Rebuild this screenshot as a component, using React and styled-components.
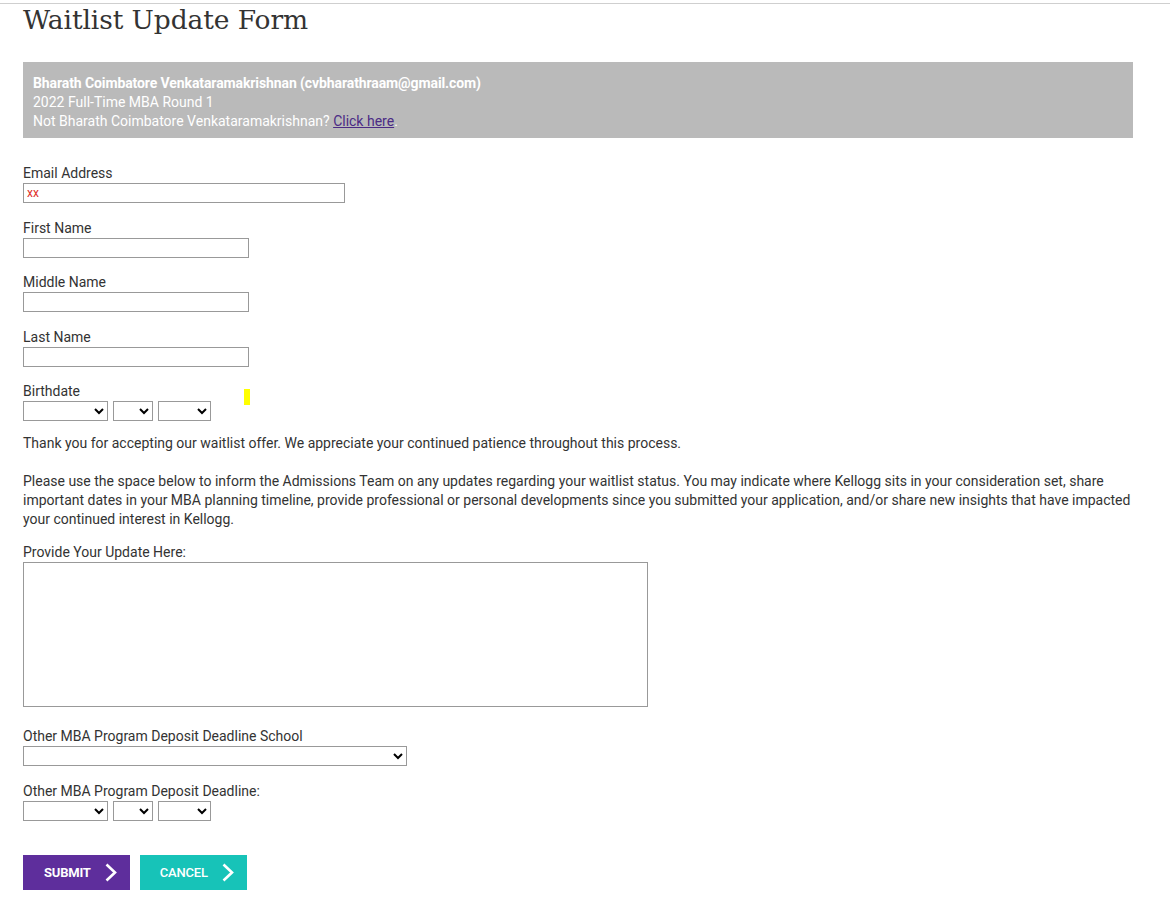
import React from 'react';
import styled, { createGlobalStyle } from 'styled-components';

const GlobalStyle = createGlobalStyle`
  body {
    margin: 0;
    background: #fff;
    font-family: Roboto, "Liberation Sans", Arial, sans-serif;
    font-size: 14px;
    color: #333;
  }
`;

function Chevron() {
  return (
    <svg width="12" height="19" viewBox="0 0 12 19">
      <path d="M1.5 1.5 L10 9.5 L1.5 17.5" fill="none" stroke="#fff" strokeWidth="2.6" />
    </svg>
  );
}

function DateSelects() {
  return (
    <SelectRow>
      <Select w={85}><option></option></Select>
      <Select w={40}><option></option></Select>
      <Select w={53}><option></option></Select>
    </SelectRow>
  );
}

export default function App() {
  return (
    <>
      <GlobalStyle />
      <TopRule />
      <Page>
        <Title>Waitlist Update Form</Title>

        <InfoBox>
          <strong>Bharath Coimbatore Venkataramakrishnan (cvbharathraam@gmail.com)</strong>
          <div>2022 Full-Time MBA Round 1</div>
          <div>Not Bharath Coimbatore Venkataramakrishnan? <a href="#">Click here</a>.</div>
        </InfoBox>

        <Field>
          <Label>Email Address</Label>
          <TextInput w={322} defaultValue="xx" error />
        </Field>
        <Field>
          <Label>First Name</Label>
          <TextInput w={226} />
        </Field>
        <Field>
          <Label>Middle Name</Label>
          <TextInput w={226} />
        </Field>
        <Field>
          <Label>Last Name</Label>
          <TextInput w={226} />
        </Field>
        <Field gap={13}>
          <Label>Birthdate</Label>
          <BirthRow>
            <DateSelects />
            <Marker />
          </BirthRow>
        </Field>

        <Para>Thank you for accepting our waitlist offer. We appreciate your continued patience throughout this process.</Para>
        <Para gap={14}>
          Please use the space below to inform the Admissions Team on any updates regarding your waitlist status. You may indicate where Kellogg sits in your consideration set, share important dates in your MBA planning timeline, provide professional or personal developments since you submitted your application, and/or share new insights that have impacted your continued interest in Kellogg.
        </Para>

        <Field gap={19}>
          <Label h={19}>Provide Your Update Here:</Label>
          <TextArea />
        </Field>
        <Field>
          <Label>Other MBA Program Deposit Deadline School</Label>
          <Select w={384}><option></option></Select>
        </Field>
        <Field gap={34}>
          <Label>Other MBA Program Deposit Deadline:</Label>
          <DateSelects />
        </Field>

        <ButtonRow>
          <ActionButton bg="#5e2e9c" bold>SUBMIT <Chevron /></ActionButton>
          <ActionButton bg="#17c3b8">CANCEL <Chevron /></ActionButton>
        </ButtonRow>
      </Page>
    </>
  );
}

const TopRule = styled.div`
  margin-top: 3px;
  height: 1px;
  background: #cfcfcf;
`;

const Page = styled.div`
  padding: 0 37px 0 23px;
`;

const Title = styled.h1`
  margin: 0 0 26px;
  font-family: "DejaVu Serif", "Liberation Serif", serif;
  font-weight: normal;
  font-size: 26.5px;
  line-height: 32px;
  color: #333;
  letter-spacing: -0.1px;
`;

const InfoBox = styled.div`
  background: #bababa;
  color: #fff;
  padding: 12px 10px 7px;
  line-height: 19px;
  margin-bottom: 25px;

  strong {
    display: block;
    font-weight: 700;
    letter-spacing: -0.1px;
  }

  a {
    color: #4b2a85;
    text-decoration: underline;
  }
`;

const Field = styled.div`
  margin-bottom: ${p => p.gap ?? 14.5}px;
`;

const Label = styled.div`
  line-height: ${p => p.h ?? 20}px;
  color: #333;
`;

const TextInput = styled.input`
  display: block;
  box-sizing: border-box;
  width: ${p => p.w}px;
  height: 20px;
  border: 1px solid #999;
  padding: 0 3px;
  font-family: Roboto, sans-serif;
  font-size: 12px;
  color: ${p => (p.error ? '#e0302a' : '#333')};
  outline: none;
`;

const BirthRow = styled.div`
  position: relative;
  width: 230px;
`;

const Marker = styled.span`
  position: absolute;
  left: 221px;
  top: -12px;
  width: 6px;
  height: 16px;
  background: #ffff00;
`;

const SelectRow = styled.div`
  display: flex;
  gap: 5px;
`;

const Select = styled.select`
  box-sizing: border-box;
  width: ${p => p.w}px;
  height: 20px;
  border: 1px solid #999;
  border-radius: 0;
  background: #fff;
  font-size: 12px;
  padding: 0;
  display: block;
`;

const Para = styled.p`
  margin: 0 0 ${p => p.gap ?? 19}px;
  line-height: 19px;
  color: #333;
`;

const TextArea = styled.textarea`
  display: block;
  box-sizing: border-box;
  width: 625px;
  height: 145px;
  border: 1px solid #999;
  resize: none;
  outline: none;
`;

const ButtonRow = styled.div`
  display: flex;
  gap: 10px;
  margin-bottom: 10px;
`;

const ActionButton = styled.button`
  display: flex;
  align-items: center;
  gap: 14px;
  height: 35px;
  padding: 0 13px 0 ${p => (p.bold ? 21 : 20)}px;
  border: none;
  border-radius: 0;
  background: ${p => p.bg};
  color: #fff;
  font-family: Roboto, "Liberation Sans", sans-serif;
  font-size: 13px;
  font-weight: ${p => (p.bold ? 700 : 500)};
  letter-spacing: -0.2px;
  cursor: pointer;
`;
